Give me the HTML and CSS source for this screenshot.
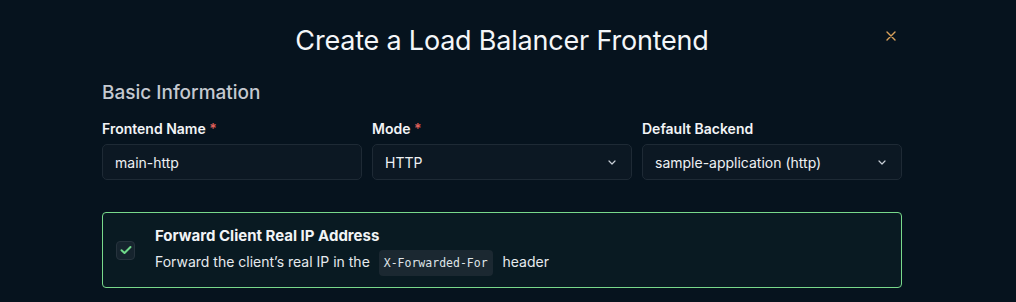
FILE: index.html
```html
<!DOCTYPE html>
<html lang="en">
<head>
<meta charset="utf-8">
<title>Create a Load Balancer Frontend</title>
<link rel="stylesheet" href="styles.css">
</head>
<body>
<div class="modal">
  <header class="modal-header">
    <span></span>
    <h1 class="modal-title">Create a Load Balancer Frontend</h1>
    <button class="close-btn" aria-label="Close">
      <svg width="10" height="10" viewBox="0 0 10 10"><path d="M1 1L9 9M9 1L1 9" stroke="#d8a15c" stroke-width="1.4" stroke-linecap="round"/></svg>
    </button>
  </header>
  <h2 class="section-title">Basic Information</h2>
  <div class="fields">
    <div class="field">
      <label class="label">Frontend Name <span class="req">*</span></label>
      <div class="input">main-http</div>
    </div>
    <div class="field">
      <label class="label">Mode <span class="req">*</span></label>
      <div class="input select">HTTP
        <svg class="chev" width="8" height="5" viewBox="0 0 8 5"><path d="M1 1L4 4L7 1" stroke="#c8ced6" stroke-width="1.2" fill="none" stroke-linecap="round" stroke-linejoin="round"/></svg>
      </div>
    </div>
    <div class="field">
      <label class="label">Default Backend</label>
      <div class="input select">sample-application (http)
        <svg class="chev" width="8" height="5" viewBox="0 0 8 5"><path d="M1 1L4 4L7 1" stroke="#c8ced6" stroke-width="1.2" fill="none" stroke-linecap="round" stroke-linejoin="round"/></svg>
      </div>
    </div>
  </div>
  <div class="option-card">
    <span class="checkbox">
      <svg width="12" height="10" viewBox="0 0 12 10"><path d="M1.5 5.2L4.5 8L10.5 2" stroke="#6fd98a" stroke-width="2" fill="none" stroke-linecap="round" stroke-linejoin="round"/></svg>
    </span>
    <div class="option-text">
      <div class="option-title">Forward Client Real IP Address</div>
      <div class="option-desc">Forward the client’s real IP in the <code class="code">X-Forwarded-For</code> header</div>
    </div>
  </div>
</div>
</body>
</html>
```

FILE: styles.css
```css
html, body {
  margin: 0;
  padding: 0;
  background: #06131e;
  height: 100%;
}
body {
  font-family: Inter, "Noto Sans", sans-serif;
  color: #e9edf1;
  overflow: hidden;
}
.modal {
  width: 800px;
  padding: 20px 0 0 102px;
}
.modal-header {
  display: grid;
  grid-template-columns: 1fr auto 1fr;
  align-items: center;
  height: 40px;
}
.modal-title {
  margin: 0;
  font-size: 27px;
  font-weight: 400;
  color: #f4f6f8;
  letter-spacing: -0.2px;
}
.close-btn {
  justify-self: end;
  margin-right: 5px;
  background: none;
  border: 0;
  padding: 0;
  width: 12px;
  height: 12px;
  display: flex;
  align-items: center;
  justify-content: center;
  margin-top: -8px;
}
.section-title {
  margin: 20px 0 0;
  font-size: 19px;
  font-weight: 500;
  color: #c4c9d0;
  line-height: 26px;
}
.fields {
  display: grid;
  grid-template-columns: repeat(3, 1fr);
  gap: 10px;
  margin-top: 14px;
}
.field {
  display: flex;
  flex-direction: column;
}
.label {
  font-size: 14px;
  font-weight: 600;
  color: #f2f4f6;
  line-height: 18px;
}
.req {
  color: #e0605a;
}
.input {
  margin-top: 6px;
  height: 36px;
  box-sizing: border-box;
  border: 1px solid #1e2a35;
  border-radius: 5px;
  background: #0c1823;
  padding: 0 12px;
  display: flex;
  align-items: center;
  justify-content: space-between;
  font-size: 14px;
  color: #eef1f4;
}
.chev {
  margin-right: 3px;
}
.option-card {
  margin-top: 32px;
  height: 76px;
  box-sizing: border-box;
  border: 1px solid #78d98b;
  border-radius: 4px;
  background: #091a22;
  display: flex;
  align-items: center;
  padding-left: 13px;
}
.checkbox {
  width: 19px;
  height: 19px;
  box-sizing: border-box;
  border: 1px solid #26333d;
  border-radius: 4px;
  background: #16242e;
  display: flex;
  align-items: center;
  justify-content: center;
}
.option-text {
  margin-left: 20px;
}
.option-title {
  font-size: 15px;
  font-weight: 700;
  color: #f2f4f6;
  line-height: 20px;
}
.option-desc {
  margin-top: 4px;
  font-size: 14px;
  color: #e6eaee;
  line-height: 24px;
}
.code {
  font-family: "DejaVu Sans Mono", "Liberation Mono", monospace;
  font-size: 11.5px;
  background: #1b2831;
  color: #dfe4e8;
  border-radius: 4px;
  padding: 6px 5px;
  margin: 0 6px 0 5px;
}
```
